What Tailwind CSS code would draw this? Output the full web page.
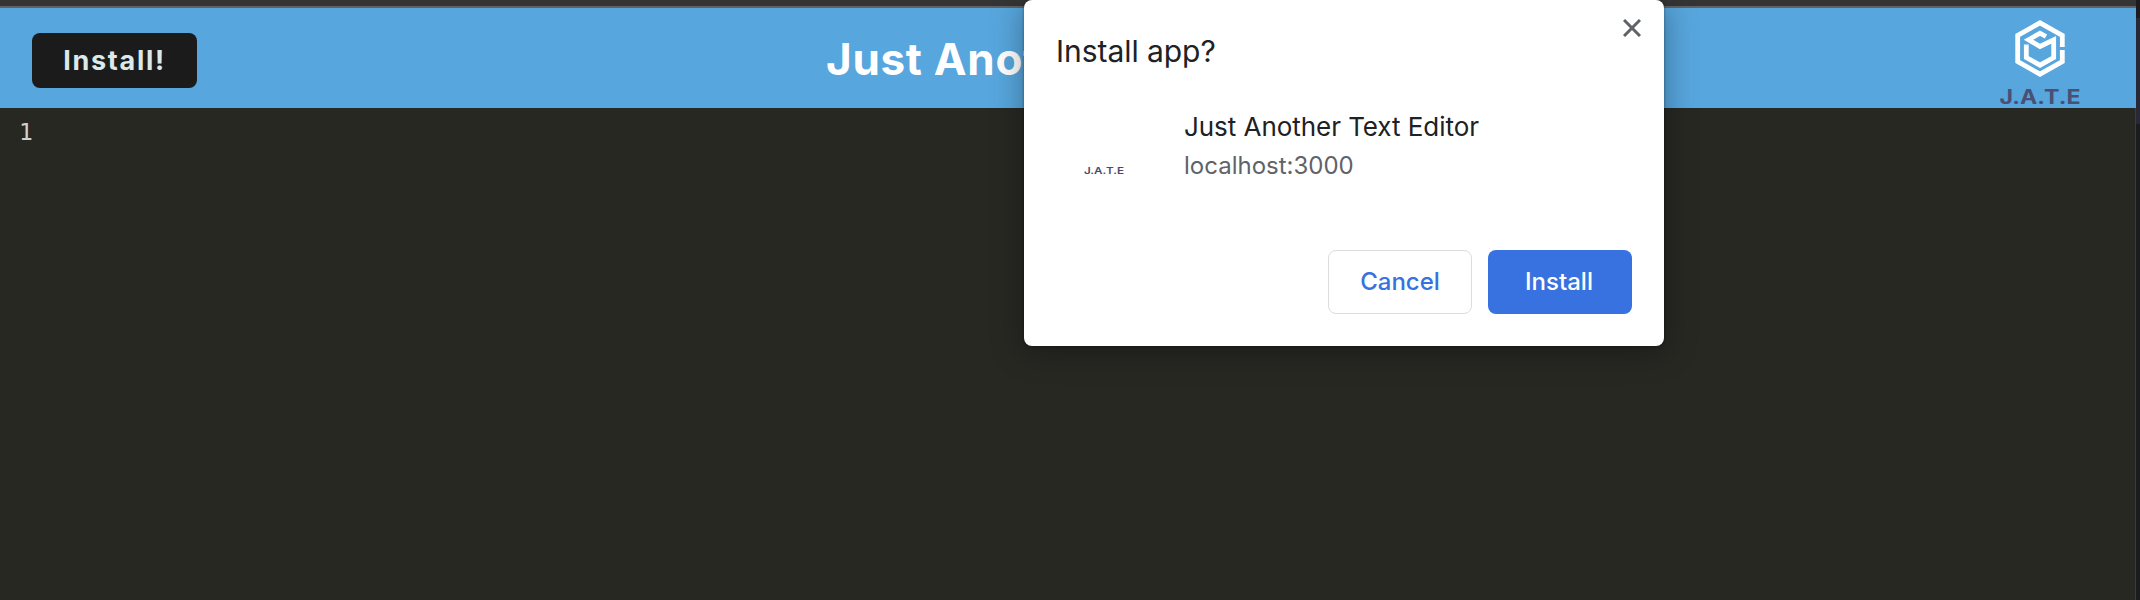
<!DOCTYPE html>
<html lang="en">
<head>
<meta charset="utf-8">
<title>Just Another Text Editor</title>
<script src="https://cdn.jsdelivr.net/npm/@tailwindcss/browser@4"></script>
</head>
<body class="relative flex h-[600px] w-[2140px] overflow-hidden bg-[#272822] font-['Inter',sans-serif]">
  <div class="flex w-[2136px] shrink-0 flex-col">
    <div class="h-2 border-b-2 border-[#626262] bg-[#353535] box-border"></div>
    <header class="flex h-[100px] items-start bg-[#57a6dd] pl-8 pr-[46px]">
      <button class="mt-[25px] h-[55px] w-[165px] rounded-lg bg-[#1b1b1b] pt-[2px] text-[27px] font-bold tracking-[1.7px] text-[#dde8e8]">Install!</button>
      <h1 class="mt-[23px] ml-[629px] text-[44px] leading-[56px] font-bold tracking-[0.7px] whitespace-nowrap text-white">Just Another Text Editor</h1>
      <svg class="mt-[10px] ml-auto" width="92" height="90" viewBox="0 0 92 90">
        <g fill="none" stroke="#fff" stroke-width="4.8">
          <path d="M64.3 29V17.5L42 4.8L19.7 17.5V43.5L42 56.2L64.3 43.5V32"/>
          <path d="M28.3 26.5V39.5L42 47.2L55.7 39.5V21.8L42 28.5L30.5 21.8L42 15.2L48 18.5"/>
        </g>
        <text x="1.5" y="86" textLength="81" lengthAdjust="spacingAndGlyphs" font-family="Inter" font-size="19.5" font-weight="700" fill="#4a4f74">J.A.T.E</text>
      </svg>
    </header>
    <main class="flex-1 border-r border-[#3c3c3c] bg-[#272822] pl-[19px] pt-[10px] font-['DejaVu_Sans_Mono',monospace] text-[23px] leading-[28px] text-[#d0d0cc]">1</main>
  </div>
  <div class="flex w-1 shrink-0 flex-col bg-[#1b1c20]">
    <div class="mt-[18px] h-[106px] bg-[#272936]"></div>
  </div>

  <section class="absolute left-[1024px] top-0 flex h-[346px] w-[640px] flex-col rounded-lg bg-white px-8 shadow-[0_4px_32px_rgba(0,0,0,0.35),0_0_3px_rgba(0,0,0,0.4)]">
    <svg class="absolute left-[599px] top-[19px]" width="18" height="18" viewBox="0 0 18 18" stroke="#5f6368" stroke-width="3" fill="none"><path d="M1 1L17 17M17 1L1 17"/></svg>
    <h2 class="mt-[31px] h-10 text-[30px] leading-10 tracking-[-0.05px] text-[#202124]">Install app?</h2>
    <div class="mt-[35px] flex h-[80px]">
      <svg class="mt-[18px] shrink-0" width="128" height="60" viewBox="0 0 128 60"><text x="28" y="50" textLength="40" lengthAdjust="spacingAndGlyphs" font-family="Inter" font-size="9.5" font-weight="600" fill="#4a4a66">J.A.T.E</text></svg>
      <div>
        <p class="h-[40px] text-[26px] leading-[42px] tracking-[-0.05px] text-[#202124]">Just Another Text Editor</p>
        <p class="h-[40px] text-[24px] leading-[40px] text-[#5f6368]">localhost:3000</p>
      </div>
    </div>
    <div class="mt-[64px] flex justify-end gap-4">
      <button class="h-16 w-36 rounded-lg border border-[#dadce0] text-[24px] font-medium text-[#3871e0]">Cancel</button>
      <button class="h-16 w-36 rounded-lg bg-[#3871e0] pr-[2px] text-[24px] font-medium text-white">Install</button>
    </div>
  </section>
</body>
</html>
